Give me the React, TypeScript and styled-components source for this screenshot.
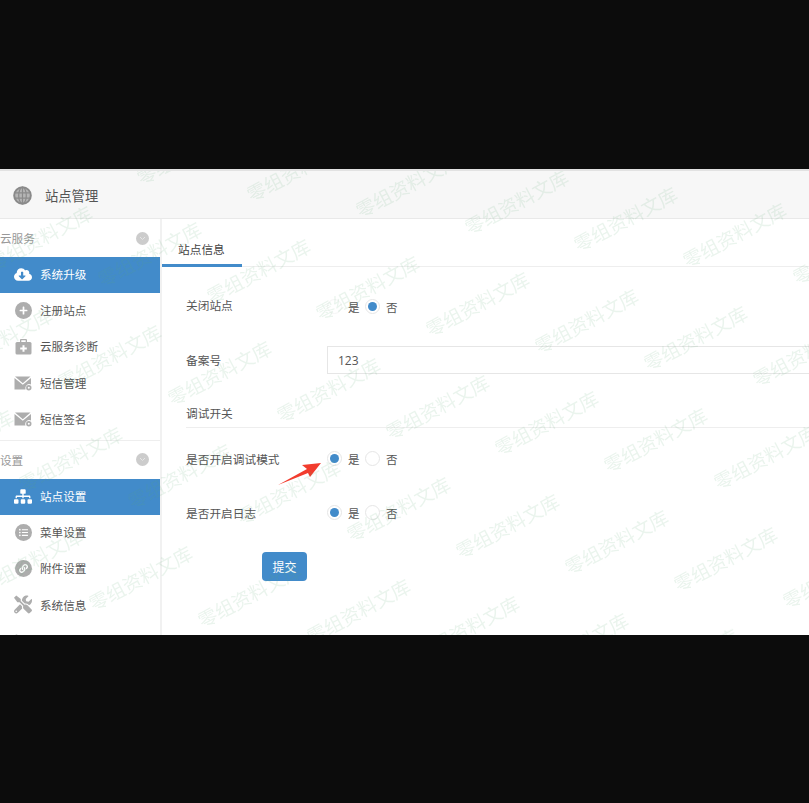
import styled, { createGlobalStyle } from "styled-components";
import {
  FaCloudDownloadAlt,
  FaLink,
  FaListUl,
  FaPlus,
  FaSitemap,
  FaTools,
} from "react-icons/fa";
import type { ReactNode } from "react";

const GlobalStyle = createGlobalStyle`
  html, body {
    margin: 0;
    padding: 0;
    background: #0c0c0c;
  }
  body {
    font-family: "Liberation Sans", "Noto Sans CJK SC", sans-serif;
  }
`;

const Screen = styled.div`
  width: 809px;
  height: 803px;
  padding: 169px 0 168px;
  box-sizing: border-box;
  background: #0c0c0c;
  overflow: hidden;
`;

const Frame = styled.div`
  position: relative;
  height: 466px;
  display: flex;
  flex-direction: column;
  overflow: hidden;
  background: #fff;
  border-top: 2px solid #e2e2e2;
  box-sizing: border-box;
  filter: blur(0.35px);
`;

const Header = styled.header`
  flex: none;
  height: 48px;
  display: flex;
  align-items: center;
  gap: 13px;
  padding: 1px 0 0 13px;
  box-sizing: border-box;
  background: #f7f7f7;
  border-bottom: 1px solid #e9e9e9;
`;

const Title = styled.h1`
  margin: 0;
  font-size: 13.3px;
  font-weight: 400;
  color: #555;
`;

const Body = styled.div`
  flex: 1;
  display: flex;
  min-height: 0;
`;

const Sidebar = styled.aside`
  flex: none;
  width: 162px;
  box-sizing: border-box;
  border-right: 2px solid #f1f1f1;
  overflow: hidden;
`;

const SideGroup = styled.div`
  & + & {
    border-top: 1px solid #eee;
    margin-top: 1px;
  }
`;

const GroupHead = styled.div`
  height: 38px;
  display: flex;
  align-items: center;
  justify-content: space-between;
  padding-right: 11px;
  font-size: 11.6px;
  color: #999;
`;

const Collapse = styled.span`
  width: 13px;
  height: 13px;
  border-radius: 50%;
  background: #ccc;
  display: flex;
  align-items: center;
  justify-content: center;
`;

const SideItem = styled.div<{ $active?: boolean }>`
  height: 36.4px;
  box-sizing: border-box;
  padding: 0 0 ${(props) => (props.$active ? "2px" : "3px")} 14px;
  display: flex;
  align-items: center;
  gap: 8px;
  font-size: 11.6px;
  color: ${(props) => (props.$active ? "#fff" : "#555")};
  background: ${(props) => (props.$active ? "#428bca" : "transparent")};
`;

const IconBox = styled.span<{ $active?: boolean }>`
  width: 18px;
  height: 18px;
  flex: none;
  display: flex;
  align-items: center;
  justify-content: center;
  color: ${(props) => (props.$active ? "#fff" : "#adadad")};
`;

const RoundIcon = styled.span`
  width: 17px;
  height: 17px;
  border-radius: 50%;
  background: #adadad;
  color: #fff;
  display: flex;
  align-items: center;
  justify-content: center;
`;

const Main = styled.main`
  flex: 1;
  min-width: 0;
  position: relative;
`;

const Tabs = styled.div`
  height: 48px;
  box-sizing: border-box;
  border-bottom: 1px solid #eee;
  display: flex;
`;

const Tab = styled.div`
  width: 80px;
  height: 48px;
  box-sizing: border-box;
  padding: 21px 0 0 16px;
  font-size: 11.7px;
  color: #444;
  border-bottom: 3px solid #428bca;
`;

const Form = styled.form`
  display: flex;
  flex-direction: column;
  gap: 25px;
  padding: 26px 0 0 24px;
`;

const Row = styled.div<{ $shift?: number }>`
  height: 28px;
  display: flex;
  align-items: center;
  margin-top: ${(props) => props.$shift ?? 0}px;
`;

const Label = styled.label<{ $lift?: number }>`
  flex: none;
  width: 141px;
  margin-top: ${(props) => props.$lift ?? -2}px;
  font-size: 11.7px;
  color: #555;
`;

const RadioGroup = styled.div`
  display: flex;
  align-items: center;
  margin-top: -1px;
  font-size: 11.5px;
  color: #555;
`;

const Radio = styled.span<{ $checked?: boolean; $faint?: boolean }>`
  width: 15px;
  height: 15px;
  box-sizing: border-box;
  border-radius: 50%;
  margin-right: 6px;
  border: 1px solid ${(props) => (props.$faint ? "#f6f6f6" : "#e6e6e6")};
  display: flex;
  align-items: center;
  justify-content: center;
  &::after {
    content: "";
    width: 9px;
    height: 9px;
    border-radius: 50%;
    background: ${(props) => (props.$checked ? "#428bca" : "transparent")};
  }
`;

const RadioText = styled.span`
  width: 17px;
`;

const TextInput = styled.div`
  flex: 1;
  height: 28px;
  margin-right: -10px;
  box-sizing: border-box;
  padding-left: 10px;
  display: flex;
  align-items: center;
  font-size: 12px;
  color: #555;
  border: 1px solid #e6e6e6;
  font-family: "Open Sans", "Liberation Sans", sans-serif;
`;

const Legend = styled.div`
  height: 29px;
  box-sizing: border-box;
  padding-top: 5px;
  font-size: 11.7px;
  color: #555;
  border-bottom: 1px solid #eee;
`;

const Submit = styled.button`
  width: 45px;
  height: 29px;
  margin-left: 76px;
  padding: 0;
  border: none;
  border-radius: 4px;
  background: #428bca;
  color: #fff;
  font-family: inherit;
  font-size: 12px;
`;

const ArrowMark = styled.svg`
  position: absolute;
  left: 116px;
  top: 243px;
  width: 46px;
  height: 26px;
`;

const WatermarkLayer = styled.div`
  position: absolute;
  inset: 0;
  overflow: hidden;
  pointer-events: none;
`;

const Stamp = styled.span`
  position: absolute;
  font-size: 19px;
  line-height: 1;
  white-space: nowrap;
  color: rgba(90, 170, 115, 0.13);
  transform: translate(-50%, -50%) rotate(-28deg);
`;

const Globe = () => (
  <svg width="19" height="19" viewBox="0 0 19 19" fill="#b5b5b5" stroke="#8a8a8a">
    <circle cx="9.5" cy="9.5" r="8.3" strokeWidth="2" />
    <ellipse cx="9.5" cy="9.5" rx="3.8" ry="8.3" strokeWidth="1.2" fill="none" />
    <path d="M9.5 1v17M1.4 6.8h16.2M1.4 12.2h16.2" strokeWidth="1.2" fill="none" />
  </svg>
);

const Mail = () => (
  <svg width="18" height="16" viewBox="0 0 18 16">
    <path d="M1 1.5h15.500L8.800 8.300z" fill="#adadad" />
    <path d="M.5 3v11.500h11a4 4 0 0 1 5.500-5V3L8.800 9.800z" fill="#adadad" />
    <circle cx="14.800" cy="12.800" r="2.700" fill="#adadad" />
    <circle cx="14.800" cy="12.800" r="1" fill="#fff" />
  </svg>
);

const Case = () => (
  <svg width="17" height="17" viewBox="0 0 17 17">
    <path d="M5 4V2.200C5 1.500 5.500 1 6.200 1h4.600c.7 0 1.200.5 1.200 1.200V4h-1.300V2.300H6.300V4z" fill="#adadad" />
    <rect x="0.500" y="4" width="16" height="12.500" rx="1.500" fill="#adadad" />
    <path d="M7.500 7.200h2v2.300h2.300v2h-2.300v2.300h-2v-2.300H5.200v-2h2.300z" fill="#fff" />
  </svg>
);

const Chevron = () => (
  <svg width="7" height="5" viewBox="0 0 7 5" fill="none">
    <path d="M1 1l2.500 2.500L6 1" stroke="#e6e6e6" strokeWidth="1" />
  </svg>
);

type MenuEntry = { label: string; icon: ReactNode; active?: boolean };

const cloudEntries: MenuEntry[] = [
  { label: "系统升级", icon: <FaCloudDownloadAlt size={19} />, active: true },
  { label: "注册站点", icon: <RoundIcon><FaPlus size={9} /></RoundIcon> },
  { label: "云服务诊断", icon: <Case /> },
  { label: "短信管理", icon: <Mail /> },
  { label: "短信签名", icon: <Mail /> },
];

const settingEntries: MenuEntry[] = [
  { label: "站点设置", icon: <FaSitemap size={19} />, active: true },
  { label: "菜单设置", icon: <RoundIcon><FaListUl size={9} /></RoundIcon> },
  { label: "附件设置", icon: <RoundIcon><FaLink size={9} /></RoundIcon> },
  { label: "系统信息", icon: <FaTools size={21} /> },
  { label: "", icon: <FaListUl size={16} /> },
];

const SideMenu = ({ title, entries }: { title: string; entries: MenuEntry[] }) => (
  <SideGroup>
    <GroupHead>
      {title}
      <Collapse><Chevron /></Collapse>
    </GroupHead>
    {entries.map((entry) => (
      <SideItem key={entry.label} $active={entry.active}>
        <IconBox $active={entry.active}>{entry.icon}</IconBox>
        {entry.label}
      </SideItem>
    ))}
  </SideGroup>
);

const YesNo = ({ yes, faint }: { yes: boolean; faint?: boolean }) => (
  <RadioGroup>
    <Radio $checked={yes} $faint={faint} />
    <RadioText>是</RadioText>
    <Radio $checked={!yes} />
    <RadioText>否</RadioText>
  </RadioGroup>
);

// the watermark repeats on a skewed lattice, measured in frame coordinates
const stamps: { x: number; y: number }[] = [];
for (let row = -2; row < 5; row++) {
  for (let col = -8; col < 9; col++) {
    const x = 517 + col * 109.2 - row * 39.5;
    const y = 32 + col * 16.7 + row * 102.3;
    if (x > -70 && x < 880 && y > -50 && y < 520) stamps.push({ x, y });
  }
}

export default function App() {
  return (
    <>
      <GlobalStyle />
      <Screen>
        <Frame>
          <Header>
            <Globe />
            <Title>站点管理</Title>
          </Header>
          <Body>
            <Sidebar>
              <SideMenu title="云服务" entries={cloudEntries} />
              <SideMenu title="设置" entries={settingEntries} />
            </Sidebar>
            <Main>
              <Tabs>
                <Tab>站点信息</Tab>
              </Tabs>
              <Form>
                <Row>
                  <Label $lift={-5}>关闭站点</Label>
                  <YesNo yes={false} faint />
                </Row>
                <Row>
                  <Label>备案号</Label>
                  <TextInput>123</TextInput>
                </Row>
                <Legend>调试开关</Legend>
                <Row $shift={-8}>
                  <Label>是否开启调试模式</Label>
                  <YesNo yes />
                </Row>
                <Row $shift={1}>
                  <Label>是否开启日志</Label>
                  <YesNo yes />
                </Row>
                <Submit type="button">提交</Submit>
              </Form>
              <ArrowMark viewBox="0 0 46 26">
                <polygon points="0,23 29,7 24,3 43,1 32,15 30,11" fill="#f23c2e" />
              </ArrowMark>
            </Main>
          </Body>
          <WatermarkLayer>
            {stamps.map((stamp) => (
              <Stamp key={`${stamp.x}-${stamp.y}`} style={{ left: stamp.x, top: stamp.y }}>
                零组资料文库
              </Stamp>
            ))}
          </WatermarkLayer>
        </Frame>
      </Screen>
    </>
  );
}
